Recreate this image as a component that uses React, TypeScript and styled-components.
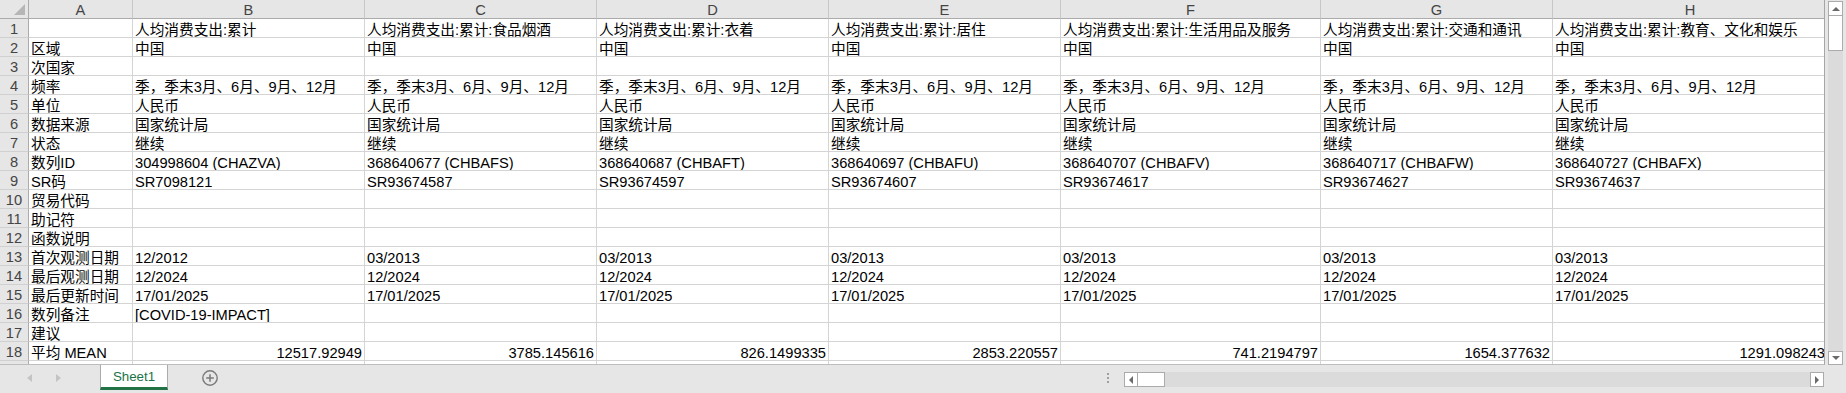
import styled, { createGlobalStyle } from "styled-components";

type Dir = "up" | "down" | "left" | "right";

const GlobalStyle = createGlobalStyle`
  body {
    margin: 0;
    background: #e6e6e6;
    font-family: "Liberation Sans", "Noto Sans CJK SC", sans-serif;
    overflow: hidden;
  }
`;

// css triangle for the little scroll / nav arrows
const tri = (dir: Dir, w: number, h: number, color: string) => {
  switch (dir) {
    case "up":
      return `border-left:${w}px solid transparent;border-right:${w}px solid transparent;border-bottom:${h}px solid ${color};`;
    case "down":
      return `border-left:${w}px solid transparent;border-right:${w}px solid transparent;border-top:${h}px solid ${color};`;
    case "left":
      return `border-top:${w}px solid transparent;border-bottom:${w}px solid transparent;border-right:${h}px solid ${color};`;
    default:
      return `border-top:${w}px solid transparent;border-bottom:${w}px solid transparent;border-left:${h}px solid ${color};`;
  }
};

const Window = styled.div`
  width: 1846px;
  height: 393px;
  display: flex;
  flex-direction: column;
  background: #e6e6e6;
`;

const Main = styled.div`
  display: flex;
  height: 365px;
`;

const Viewport = styled.div`
  width: 1825px;
  height: 365px;
  box-sizing: border-box;
  overflow: hidden;
  background: #ffffff;
  border-right: 1px solid #a6a6a6;
  border-bottom: 1px solid #bdbdbd;
`;

const Grid = styled.div`
  display: grid;
  grid-template-columns: 29px 104px 232px 232px 232px 232px 260px 232px 275px;
  grid-auto-rows: 19px;
  font-size: 11pt;
  color: #000000;
`;

const Corner = styled.div`
  box-sizing: border-box;
  background: #e6e6e6;
  border-right: 1px solid #ababab;
  border-bottom: 1px solid #ababab;
  display: flex;
  justify-content: flex-end;
  align-items: flex-end;
  padding: 0 3px 3px 0;
`;

const ColHead = styled.div`
  box-sizing: border-box;
  background: #e6e6e6;
  border-right: 1px solid #c8c8c8;
  border-bottom: 1px solid #ababab;
  color: #444444;
  text-align: center;
  line-height: 18px;
  padding-top: 1px;
`;

const RowHead = styled.div`
  box-sizing: border-box;
  background: #e6e6e6;
  border-right: 1px solid #ababab;
  border-bottom: 1px solid #d0d0d0;
  color: #444444;
  text-align: center;
  line-height: 18px;
  padding-top: 1px;
`;

const Cell = styled.div<{ $num?: boolean }>`
  box-sizing: border-box;
  border-right: 1px solid #d4d4d4;
  border-bottom: 1px solid #d4d4d4;
  padding: 2px 2px 0 2px;
  line-height: 18px;
  white-space: nowrap;
  overflow: hidden;
  text-align: ${(p) => (p.$num ? "right" : "left")};
`;

const VScroll = styled.div`
  width: 15px;
  height: 364px;
  margin: 1px 0 0 3px;
  display: flex;
  flex-direction: column;
  background: #dbdbdb;
`;

const ScrollBtn = styled.div<{ $dir: Dir }>`
  box-sizing: border-box;
  flex: none;
  width: ${(p) => (p.$dir === "up" || p.$dir === "down" ? "15px" : "14px")};
  height: ${(p) => (p.$dir === "down" ? "14px" : "15px")};
  background: #ffffff;
  border: 1px solid #ababab;
  display: flex;
  align-items: center;
  justify-content: center;

  &::before {
    content: "";
    ${(p) => tri(p.$dir, 4, 4, "#6a6a6a")}
  }
`;

const Thumb = styled.div<{ $vertical?: boolean }>`
  box-sizing: border-box;
  flex: none;
  background: #ffffff;
  border: 1px solid #ababab;
  ${(p) => (p.$vertical ? "height: 36px; margin-top: -1px;" : "width: 28px; margin-left: -1px;")}
`;

const Track = styled.div`
  flex: 1;
`;

const TabBar = styled.div`
  height: 28px;
  display: flex;
  align-items: flex-start;
`;

const NavGroup = styled.div`
  width: 100px;
  height: 26px;
  box-sizing: border-box;
  padding-left: 15px;
  display: flex;
  align-items: center;
`;

const NavArrow = styled.span<{ $dir: Dir }>`
  width: 29px;
  display: flex;
  justify-content: center;

  &::before {
    content: "";
    ${(p) => tri(p.$dir, 4, 5, "#c4c4c4")}
  }
`;

const SheetTab = styled.div`
  width: 68px;
  height: 25px;
  box-sizing: border-box;
  background: #ffffff;
  border-left: 1px solid #ababab;
  border-right: 1px solid #ababab;
  border-bottom: 3px solid #217346;
  color: #217346;
  font-size: 10pt;
  text-align: center;
  line-height: 20px;
  padding-top: 2px;
`;

const AddBtn = styled.div`
  width: 16px;
  height: 16px;
  margin: 5px 0 0 34px;
  display: flex;
`;

const Spacer = styled.div`
  flex: 1;
`;

const Splitter = styled.div`
  display: flex;
  flex-direction: column;
  gap: 2px;
  margin: 8px 15px 0 0;
`;

const Dot = styled.span`
  width: 2px;
  height: 2px;
  background: #a0a0a0;
`;

const HScroll = styled.div`
  width: 700px;
  height: 15px;
  margin: 7px 22px 0 0;
  display: flex;
  background: #dbdbdb;
`;

const cols = ["A", "B", "C", "D", "E", "F", "G", "H"];

const rep = (v: string) => Array(7).fill(v);

const rows: { label: string; cells: string[]; num?: boolean }[] = [
  {
    label: "",
    cells: [
      "人均消费支出:累计",
      "人均消费支出:累计:食品烟酒",
      "人均消费支出:累计:衣着",
      "人均消费支出:累计:居住",
      "人均消费支出:累计:生活用品及服务",
      "人均消费支出:累计:交通和通讯",
      "人均消费支出:累计:教育、文化和娱乐",
    ],
  },
  { label: "区域", cells: rep("中国") },
  { label: "次国家", cells: [] },
  { label: "频率", cells: rep("季，季末3月、6月、9月、12月") },
  { label: "单位", cells: rep("人民币") },
  { label: "数据来源", cells: rep("国家统计局") },
  { label: "状态", cells: rep("继续") },
  {
    label: "数列ID",
    cells: [
      "304998604 (CHAZVA)",
      "368640677 (CHBAFS)",
      "368640687 (CHBAFT)",
      "368640697 (CHBAFU)",
      "368640707 (CHBAFV)",
      "368640717 (CHBAFW)",
      "368640727 (CHBAFX)",
    ],
  },
  {
    label: "SR码",
    cells: [
      "SR7098121",
      "SR93674587",
      "SR93674597",
      "SR93674607",
      "SR93674617",
      "SR93674627",
      "SR93674637",
    ],
  },
  { label: "贸易代码", cells: [] },
  { label: "助记符", cells: [] },
  { label: "函数说明", cells: [] },
  { label: "首次观测日期", cells: ["12/2012", ...Array(6).fill("03/2013")] },
  { label: "最后观测日期", cells: rep("12/2024") },
  { label: "最后更新时间", cells: rep("17/01/2025") },
  { label: "数列备注", cells: ["[COVID-19-IMPACT]"] },
  { label: "建议", cells: [] },
  {
    label: "平均 MEAN",
    num: true,
    cells: [
      "12517.92949",
      "3785.145616",
      "826.1499335",
      "2853.220557",
      "741.2194797",
      "1654.377632",
      "1291.098243",
    ],
  },
];

const App = () => {
  return (
    <Window>
      <GlobalStyle />
      <Main>
        <Viewport>
          <Grid>
            <Corner>
              <svg width="11" height="11" viewBox="0 0 11 11">
                <polygon points="11,0 11,11 0,11" fill="#b6b6b6" />
              </svg>
            </Corner>
            {cols.map((c) => (
              <ColHead key={c}>{c}</ColHead>
            ))}

            {rows.map((r, i) => (
              <>
                <RowHead key={`h${i}`}>{i + 1}</RowHead>
                <Cell key={`a${i}`}>{r.label}</Cell>
                {Array.from({ length: 7 }).map((_, j) => (
                  <Cell key={`c${i}-${j}`} $num={r.num}>
                    {r.cells[j] ?? ""}
                  </Cell>
                ))}
              </>
            ))}

            {/* row 19 only peeks out under the sheet edge */}
            <RowHead />
            {cols.map((c) => (
              <Cell key={`p${c}`} />
            ))}
          </Grid>
        </Viewport>

        <VScroll>
          <ScrollBtn $dir="up" />
          <Thumb $vertical />
          <Track />
          <ScrollBtn $dir="down" />
        </VScroll>
      </Main>

      <TabBar>
        <NavGroup>
          <NavArrow $dir="left" />
          <NavArrow $dir="right" />
        </NavGroup>
        <SheetTab>Sheet1</SheetTab>
        <AddBtn>
          <svg width="16" height="16" viewBox="0 0 16 16">
            <circle cx="8" cy="8" r="7.2" fill="none" stroke="#7a7a7a" strokeWidth="1.4" />
            <path d="M8 4.2v7.6M4.2 8h7.6" stroke="#7a7a7a" strokeWidth="1.5" />
          </svg>
        </AddBtn>
        <Spacer />
        <Splitter>
          <Dot />
          <Dot />
          <Dot />
        </Splitter>
        <HScroll>
          <ScrollBtn $dir="left" />
          <Thumb />
          <Track />
          <ScrollBtn $dir="right" />
        </HScroll>
      </TabBar>
    </Window>
  );
};

export default App;
